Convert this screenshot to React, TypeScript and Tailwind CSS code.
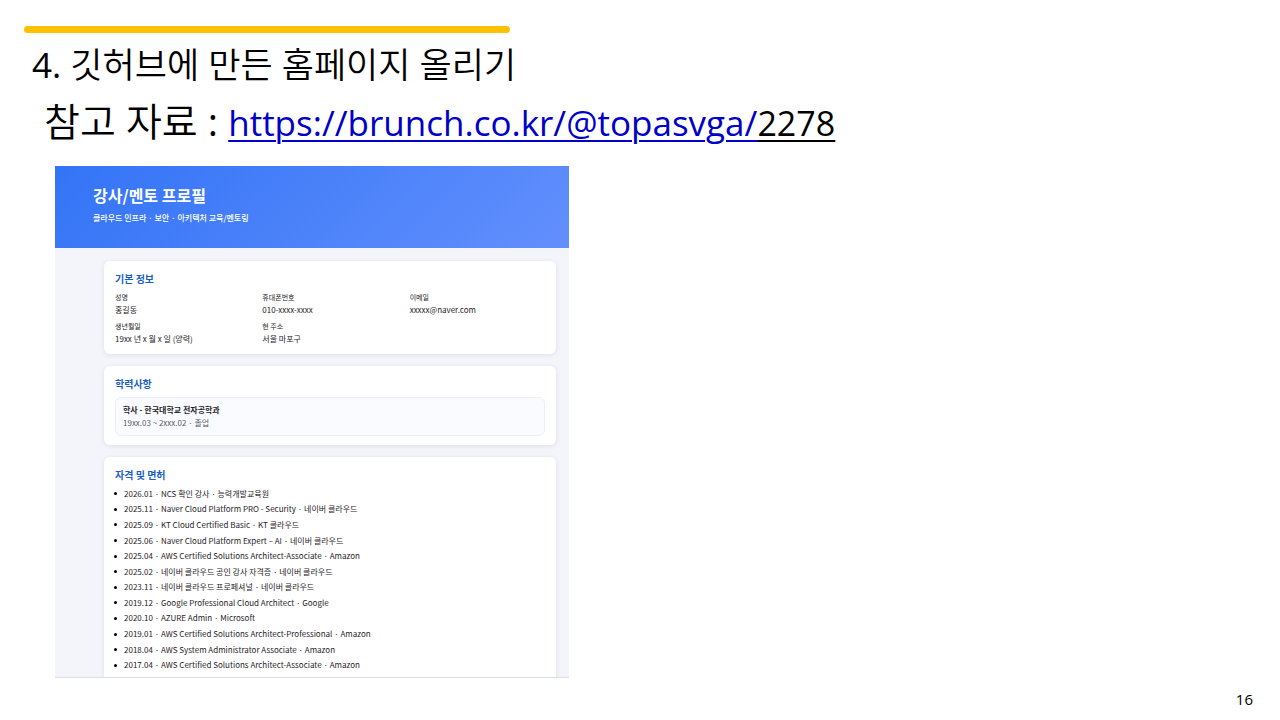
import type { ReactNode } from "react";

const basics = [
  { label: "성명", value: "홍길동" },
  { label: "휴대폰번호", value: "010-xxxx-xxxx" },
  { label: "이메일", value: "xxxxx@naver.com" },
  { label: "생년월일", value: "19xx 년 x 월 x 일 (양력)" },
  { label: "현 주소", value: "서울 마포구" },
];

const licenses = [
  "2026.01 · NCS 확인 강사 · 능력개발교육원",
  "2025.11 · Naver Cloud Platform PRO - Security · 네이버 클라우드",
  "2025.09 · KT Cloud Certified Basic · KT 클라우드",
  "2025.06 · Naver Cloud Platform Expert – AI · 네이버 클라우드",
  "2025.04 · AWS Certified Solutions Architect-Associate · Amazon",
  "2025.02 · 네이버 클라우드 공인 강사 자격증 · 네이버 클라우드",
  "2023.11 · 네이버 클라우드 프로페셔널 · 네이버 클라우드",
  "2019.12 · Google Professional Cloud Architect · Google",
  "2020.10 · AZURE Admin · Microsoft",
  "2019.01 · AWS Certified Solutions Architect-Professional · Amazon",
  "2018.04 · AWS System Administrator Associate · Amazon",
  "2017.04 · AWS Certified Solutions Architect-Associate · Amazon",
];

function Card({ title, last = false, children }: { title: string; last?: boolean; children: ReactNode }) {
  return (
    <section
      className={`bg-white px-[11px] pt-3 shadow-[0_1px_5px_rgba(30,41,90,0.10)] ${last ? "rounded-t-md pb-1" : "rounded-md pb-[9px]"}`}
    >
      <h3 className="text-[10px] leading-3 font-bold text-[#1a5fc4]">{title}</h3>
      {children}
    </section>
  );
}

function Profile() {
  return (
    <article className="ml-[55px] w-[514px] max-w-full overflow-hidden border-b border-[#dcdfe5] bg-[#f4f5fa] font-['Noto_Sans_CJK_KR',sans-serif] text-[#1f2329]">
      <header className="h-[82px] bg-linear-[135deg,#3374f6,#628ffd] pt-[19px] pl-[38px] text-white">
        <h2 className="text-[16px] leading-5 font-bold">강사/멘토 프로필</h2>
        <p className="mt-[7px] text-[8px] leading-3 font-medium">클라우드 인프라 · 보안 · 아키텍처 교육/멘토링</p>
      </header>
      <div className="flex flex-col gap-3 pt-[13px] pr-[13px] pl-[49px]">
        <Card title="기본 정보">
          <dl className="mt-[6px] grid grid-cols-3 gap-x-3 gap-y-1">
            {basics.map((item) => (
              <div key={item.label}>
                <dt className="text-[7px] leading-3">{item.label}</dt>
                <dd className="text-[8px] leading-[13px]">{item.value}</dd>
              </div>
            ))}
          </dl>
        </Card>
        <Card title="학력사항">
          <div className="mt-[7px] rounded-md border border-[#eceff5] bg-[#fafbfe] px-[7px] pt-[5px] pb-[6px] text-[8px] leading-[13px]">
            <p className="font-bold">학사 - 한국대학교 전자공학과</p>
            <p className="text-[#565b64]">19xx.03 ~ 2xxx.02 · 졸업</p>
          </div>
        </Card>
        <Card title="자격 및 면허" last>
          <ul className="mt-[5px] grid h-[187px] auto-rows-fr text-[8px]">
            {licenses.map((text) => (
              <li key={text} className="-ml-px flex items-center gap-[7px]">
                <span className="size-[3px] rounded-full bg-black" />
                {text}
              </li>
            ))}
          </ul>
        </Card>
      </div>
    </article>
  );
}

export default function App() {
  return (
    <main className="flex min-h-screen flex-col bg-white font-['Open_Sans','Noto_Sans_CJK_KR',sans-serif] text-black">
      <div className="mt-[26px] ml-6 h-[7px] w-[486px] rounded-sm bg-[#ffc000]" />
      <h1 className="mt-2 ml-8 text-[35px] leading-[48px] font-[350]">
        <span className="font-normal">4.</span> 깃허브에 만든 홈페이지 올리기
      </h1>
      <p className="mt-[6px] ml-11 text-[39px] leading-[52px] font-[350]">
        참고 자료 <span className="font-normal">:</span>{" "}
        <a
          href="https://brunch.co.kr/@topasvga/2278"
          className="text-[35px] font-normal text-[#0000c8] underline decoration-2 underline-offset-4"
        >
          https://brunch.co.kr/@topasvga/<span className="text-[34px] text-black underline decoration-2 underline-offset-4">2278</span>
        </a>
      </p>
      <div className="mt-[17px]">
        <Profile />
      </div>
      <footer className="mt-auto pr-[27px] pb-[9px] text-right text-[15px] leading-6">16</footer>
    </main>
  );
}
